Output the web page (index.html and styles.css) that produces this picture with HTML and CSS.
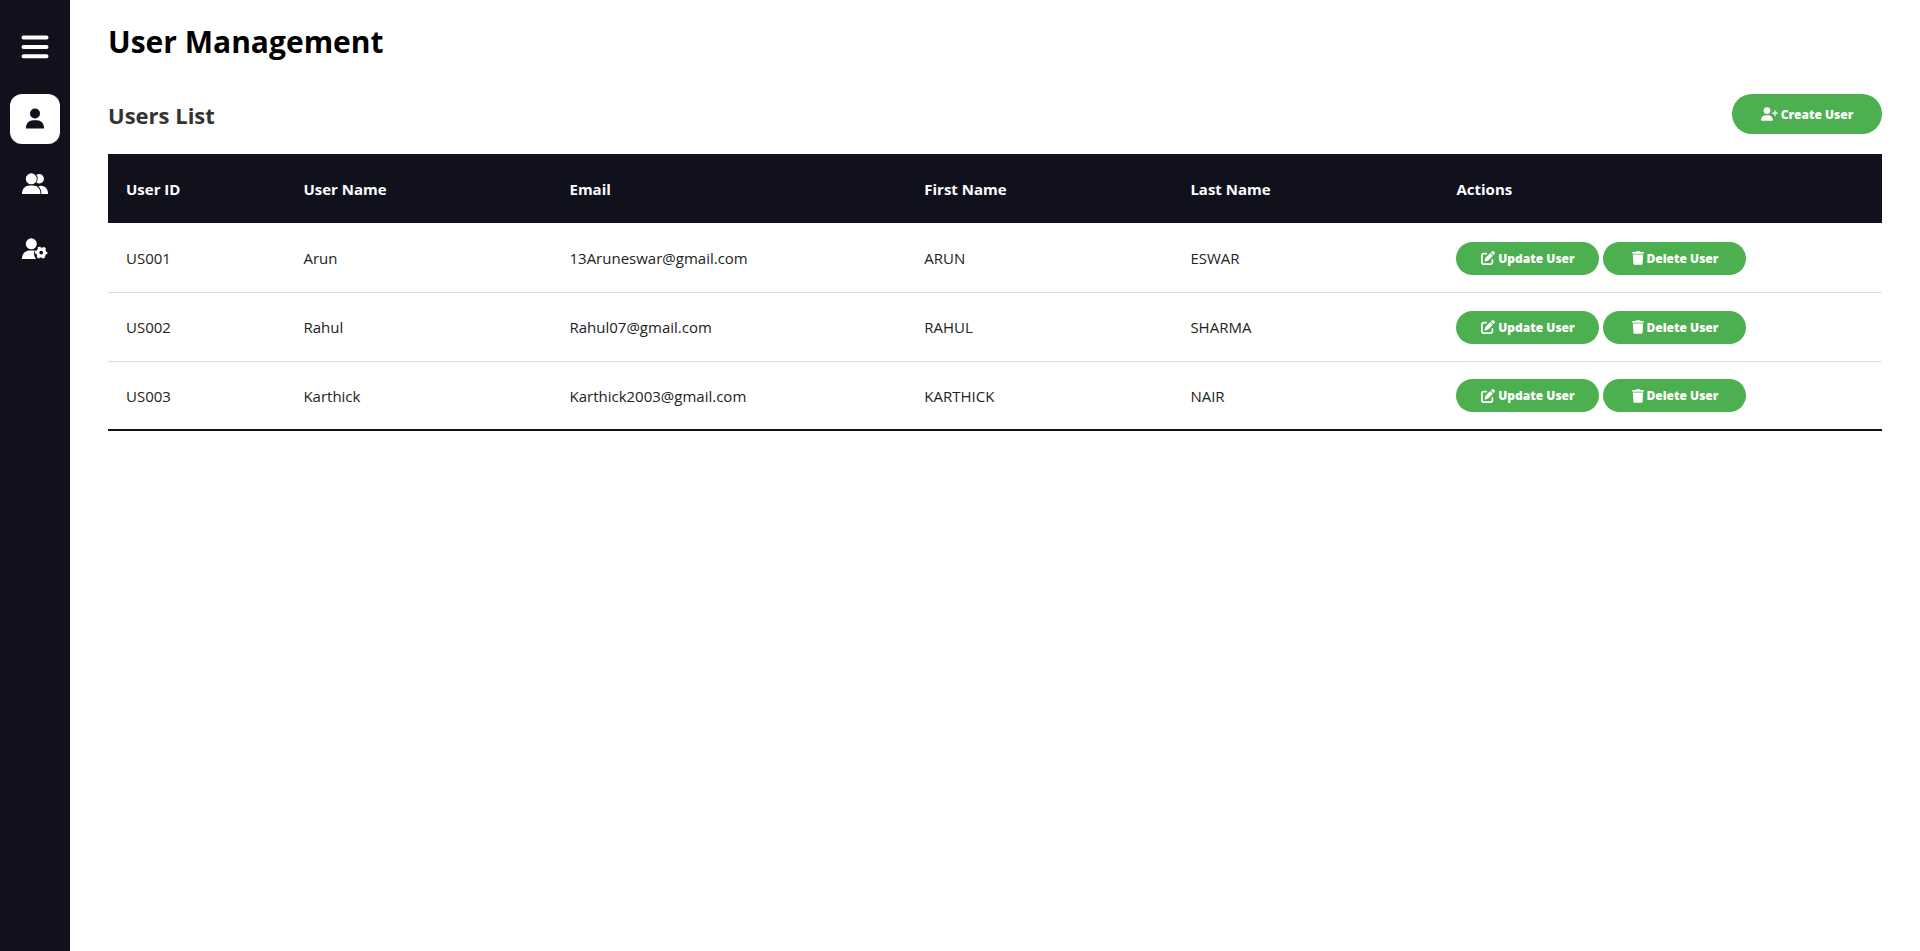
FILE: index.html
```html
<!DOCTYPE html>
<html lang="en">
<head>
<meta charset="utf-8">
<title>User Management</title>
<link rel="stylesheet" href="styles.css">
</head>
<body>
<svg class="sprite" aria-hidden="true">
  <symbol id="edit" viewBox="0 0 512 512"><path d="M471.600 21.700c-21.900-21.900-57.300-21.900-79.200 0L362.300 51.700l97.900 97.900 30.100-30.100c21.900-21.900 21.900-57.300 0-79.200L471.600 21.700zm-299.200 220c-6.100 6.100-10.800 13.600-13.500 21.900l-29.600 88.800c-2.900 8.600-.6 18.100 5.800 24.600s15.900 8.700 24.600 5.800l88.800-29.600c8.200-2.700 15.700-7.400 21.900-13.500L437.700 172.300 339.700 74.300 172.400 241.700zM96 64C43 64 0 107 0 160V416c0 53 43 96 96 96H352c53 0 96-43 96-96V320c0-17.700-14.300-32-32-32s-32 14.300-32 32v96c0 17.700-14.300 32-32 32H96c-17.700 0-32-14.300-32-32V160c0-17.700 14.300-32 32-32h96c17.700 0 32-14.300 32-32s-14.300-32-32-32H96z"/></symbol>
  <symbol id="trash" viewBox="0 0 448 512"><path d="M135.200 17.700C140.600 6.800 151.700 0 163.800 0H284.200c12.100 0 23.200 6.800 28.600 17.700L320 32h96c17.700 0 32 14.300 32 32s-14.300 32-32 32H32C14.300 96 0 81.700 0 64S14.300 32 32 32h96l7.200-14.300zM32 128H416L394.800 467c-1.600 25.300-22.600 45-47.900 45H101.100c-25.300 0-46.300-19.700-47.900-45L32 128z"/></symbol>
</svg>
<div class="layout">
  <nav class="sidebar" aria-label="Main">
    <button class="menu-toggle" type="button" aria-label="Toggle menu">
      <svg viewBox="0 0 28 24"><path d="M2.500 2.500H25.500M2.500 11.900H25.500M2.500 21.200H25.500" fill="none" stroke="currentColor" stroke-width="4" stroke-linecap="round"/></svg>
    </button>
    <a class="nav-item active" href="#" aria-label="User"><svg viewBox="0 0 28 24"><circle cx="14" cy="6.500" r="5"/><path d="M5 21.500v-1C5 16.500 8.200 13.300 12.200 13.300h3.600c4 0 7.200 3.200 7.200 7.200v1z"/></svg></a>
    <a class="nav-item" href="#" aria-label="Users"><svg viewBox="0 0 28 24"><circle cx="10.300" cy="6.800" r="5.500"/><path d="M1 22v-.8C1 16.700 4.500 13.400 8.500 13.400h3.600c4.200 0 7.300 3.300 7.300 7.800v.8z"/><path d="M15.400 2.800c.9-.5 1.900-.8 2.900-.8a4.700 4.700 0 0 1 0 9.400c-1.100 0-2-.3-2.900-.9 1.700-2.300 1.700-5.400 0-7.700zM17.300 14.300c.7-.3 1.500-.5 2.400-.5 4.200 0 7.300 3.200 7.300 7.300v.9h-6.700v-1c0-2.700-1.100-5.100-3-6.700z"/></svg></a>
    <a class="nav-item" href="#" aria-label="User settings"><svg viewBox="0 0 28 24"><circle cx="10.300" cy="6.800" r="5.500"/><path d="M1 22v-.8C1 16.700 4.500 13.400 8.500 13.400h3.600c.6 0 1.200.1 1.700.2-1.300 2.600-1 6 1.400 8.400z"/><circle cx="20.200" cy="15.600" r="3.500" fill="none" stroke="currentColor" stroke-width="3.200"/><circle cx="20.200" cy="15.600" r="5.400" fill="none" stroke="currentColor" stroke-width="1.600" stroke-dasharray="2.827 2.827" stroke-dashoffset="1.413"/></svg></a>
  </nav>
  <main class="content">
    <h1>User Management</h1>
    <div class="list-head">
      <h2>Users List</h2>
      <button class="btn btn-create" type="button"><svg class="ico-add" viewBox="0 0 640 512"><path d="M96 128a128 128 0 1 1 256 0A128 128 0 1 1 96 128zM0 482.300C0 383.800 79.800 304 178.300 304h91.400C368.200 304 448 383.800 448 482.300c0 16.400-13.300 29.700-29.700 29.700H29.700C13.300 512 0 498.700 0 482.300zM504 312V248H440c-13.300 0-24-10.700-24-24s10.700-24 24-24h64V136c0-13.300 10.700-24 24-24s24 10.700 24 24v64h64c13.300 0 24 10.700 24 24s-10.700 24-24 24H552v64c0 13.300-10.700 24-24 24s-24-10.700-24-24z"/></svg>Create User</button>
    </div>
    <table class="users">
      <colgroup><col class="c10"><col class="c15"><col class="c20"><col class="c15"><col class="c15"><col></colgroup>
      <thead><tr><th scope="col">User ID</th><th scope="col">User Name</th><th scope="col">Email</th><th scope="col">First Name</th><th scope="col">Last Name</th><th scope="col">Actions</th></tr></thead>
      <tbody>
        <tr><td>US001</td><td>Arun</td><td>13Aruneswar@gmail.com</td><td>ARUN</td><td>ESWAR</td><td><div class="actions"><button class="btn" type="button"><svg class="ico-edit"><use href="#edit"/></svg>Update User</button><button class="btn" type="button"><svg class="ico-trash"><use href="#trash"/></svg>Delete User</button></div></td></tr>
        <tr><td>US002</td><td>Rahul</td><td>Rahul07@gmail.com</td><td>RAHUL</td><td>SHARMA</td><td><div class="actions"><button class="btn" type="button"><svg class="ico-edit"><use href="#edit"/></svg>Update User</button><button class="btn" type="button"><svg class="ico-trash"><use href="#trash"/></svg>Delete User</button></div></td></tr>
        <tr><td>US003</td><td>Karthick</td><td>Karthick2003@gmail.com</td><td>KARTHICK</td><td>NAIR</td><td><div class="actions"><button class="btn" type="button"><svg class="ico-edit"><use href="#edit"/></svg>Update User</button><button class="btn" type="button"><svg class="ico-trash"><use href="#trash"/></svg>Delete User</button></div></td></tr>
      </tbody>
    </table>
  </main>
</div>
</body>
</html>
```
FILE: styles.css
```css
* { box-sizing: border-box; }
body { margin: 0; background: #fff; color: #000; font-family: "Segoe UI", "Open Sans", sans-serif; font-size: 15px; }
.sprite { display: none; }
svg { display: block; fill: currentColor; flex: none; }
button { font: inherit; border: 0; cursor: pointer; }
.layout { display: flex; min-height: 100vh; }
.sidebar { flex: none; width: 70px; background: #11101d; color: #fff; display: flex; flex-direction: column; align-items: center; padding-top: 22px; }
.menu-toggle { width: 50px; height: 50px; padding: 0; background: none; color: inherit; display: grid; place-items: center; margin-bottom: 22px; }
.menu-toggle svg { width: 28px; height: 24px; }
.nav-item { width: 50px; height: 50px; margin-bottom: 15px; border-radius: 12px; color: #fff; display: grid; place-items: center; }
.nav-item svg { width: 28px; height: 24px; }
.nav-item.active { background: #fff; color: #11101d; }
.content { flex: 1; min-width: 0; padding: 20px 38px; }
h1 { margin: 0; font-size: 30px; line-height: 44px; font-weight: 700; }
.list-head { display: flex; justify-content: space-between; align-items: center; margin: 30px 0 20px; }
h2 { margin: 0; padding-top: 2px; font-size: 22px; line-height: 32px; font-weight: 700; color: #333; }
.btn { display: inline-flex; align-items: center; justify-content: center; gap: 3px; width: 143px; height: 33px; padding: 0; border-radius: 17px; background: #4caf50; color: #fff; font-size: 12px; font-weight: 800; white-space: nowrap; }
.btn-create { width: 150px; height: 40px; border-radius: 20px; }
.ico-add { width: 17px; height: 14px; }
.ico-edit { width: 14px; height: 14px; }
.ico-trash { width: 12px; height: 14px; }
.users { width: 100%; table-layout: fixed; border-collapse: separate; border-spacing: 0; }
.c10 { width: 10%; }
.c15 { width: 15%; }
.c20 { width: 20%; }
th, td { height: 69px; padding: 0 18px; text-align: left; }
th { height: 70px; background: #11101d; border-bottom: 1px solid #fff; color: #fff; font-weight: 700; }
td { border-bottom: 1px solid #ddd; color: #222; }
tbody tr:last-child td { border-bottom: 2px solid #11101d; }
.actions { display: flex; gap: 4px; }
```
